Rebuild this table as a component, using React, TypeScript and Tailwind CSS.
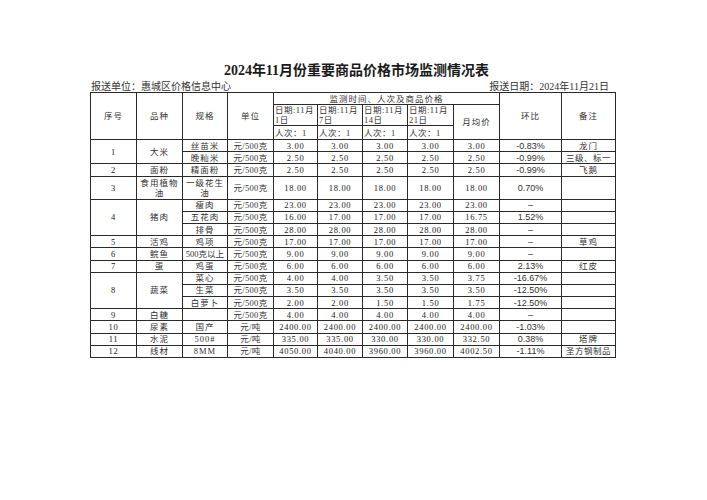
import React from 'react';

type Row = {
  no?: { t: string; span: number };
  kind?: { t: React.ReactNode; span: number };
  spec: React.ReactNode;
  unit: string;
  prices: string[];
  ratio: string;
  note?: string;
  tall?: boolean;
};

const rows: Row[] = [
  { no: { t: '1', span: 2 }, kind: { t: '大米', span: 2 }, spec: '丝苗米', unit: '元/500克', prices: ['3.00', '3.00', '3.00', '3.00', '3.00'], ratio: '-0.83%', note: '龙门' },
  { spec: '晚籼米', unit: '元/500克', prices: ['2.50', '2.50', '2.50', '2.50', '2.50'], ratio: '-0.99%', note: '三级、标一' },
  { no: { t: '2', span: 1 }, kind: { t: '面粉', span: 1 }, spec: '精面粉', unit: '元/500克', prices: ['2.50', '2.50', '2.50', '2.50', '2.50'], ratio: '-0.99%', note: '飞鹅' },
  {
    no: { t: '3', span: 1 },
    kind: { t: <>食用植物<br />油</>, span: 1 },
    spec: <>一级花生<br />油</>,
    unit: '元/500克',
    prices: ['18.00', '18.00', '18.00', '18.00', '18.00'],
    ratio: '0.70%',
    tall: true,
  },
  { no: { t: '4', span: 3 }, kind: { t: '猪肉', span: 3 }, spec: '瘦肉', unit: '元/500克', prices: ['23.00', '23.00', '23.00', '23.00', '23.00'], ratio: '–' },
  { spec: '五花肉', unit: '元/500克', prices: ['16.00', '17.00', '17.00', '17.00', '16.75'], ratio: '1.52%' },
  { spec: '排骨', unit: '元/500克', prices: ['28.00', '28.00', '28.00', '28.00', '28.00'], ratio: '–' },
  { no: { t: '5', span: 1 }, kind: { t: '活鸡', span: 1 }, spec: '鸡项', unit: '元/500克', prices: ['17.00', '17.00', '17.00', '17.00', '17.00'], ratio: '–', note: '草鸡' },
  { no: { t: '6', span: 1 }, kind: { t: '鲩鱼', span: 1 }, spec: '500克以上', unit: '元/500克', prices: ['9.00', '9.00', '9.00', '9.00', '9.00'], ratio: '–' },
  { no: { t: '7', span: 1 }, kind: { t: '蛋', span: 1 }, spec: '鸡蛋', unit: '元/500克', prices: ['6.00', '6.00', '6.00', '6.00', '6.00'], ratio: '2.13%', note: '红皮' },
  { no: { t: '8', span: 3 }, kind: { t: '蔬菜', span: 3 }, spec: '菜心', unit: '元/500克', prices: ['4.00', '4.00', '3.50', '3.50', '3.75'], ratio: '-16.67%' },
  { spec: '生菜', unit: '元/500克', prices: ['3.50', '3.50', '3.50', '3.50', '3.50'], ratio: '-12.50%' },
  { spec: '白萝卜', unit: '元/500克', prices: ['2.00', '2.00', '1.50', '1.50', '1.75'], ratio: '-12.50%' },
  { no: { t: '9', span: 1 }, kind: { t: '白糖', span: 1 }, spec: '', unit: '元/500克', prices: ['4.00', '4.00', '4.00', '4.00', '4.00'], ratio: '–' },
  { no: { t: '10', span: 1 }, kind: { t: '尿素', span: 1 }, spec: '国产', unit: '元/吨', prices: ['2400.00', '2400.00', '2400.00', '2400.00', '2400.00'], ratio: '-1.03%' },
  { no: { t: '11', span: 1 }, kind: { t: '水泥', span: 1 }, spec: '500#', unit: '元/吨', prices: ['335.00', '335.00', '330.00', '330.00', '332.50'], ratio: '0.38%', note: '塔牌' },
  { no: { t: '12', span: 1 }, kind: { t: '线材', span: 1 }, spec: '8MM', unit: '元/吨', prices: ['4050.00', '4040.00', '3960.00', '3960.00', '4002.50'], ratio: '-1.11%', note: '圣方钢制品' },
];

const td = 'border border-[#2a2a2a] p-0 text-center align-middle';
const cn = "font-['Liberation_Serif','Noto_Sans_CJK_SC',serif] text-[8.5px] leading-[10px] tracking-[1px] text-[#333]";
const num = "font-['Liberation_Serif',serif] text-[8.5px] leading-[10px] tracking-[0.7px] text-[#222]";
const pct = "font-['Liberation_Sans',sans-serif] text-[9px] leading-[10px] text-[#333]";

const DateHead: React.FC<{ day: string }> = ({ day }) => (
  <td className={`${td} !text-left !align-top h-[19px] pl-[1px] pt-[1px] ${cn} !leading-[9.5px] !tracking-[0.5px]`}>
    日期:11月
    <br />
    {day}日
  </td>
);

export default function App() {
  return (
    <div className="w-[707px] h-[500px] bg-white text-[#1a1a1a] pt-[63px] pl-[90px]">
      <div className="w-[525px]">
        <h1 className="text-center font-['Liberation_Serif','Noto_Sans_CJK_SC',serif] font-semibold text-[14px] leading-[16px] pl-[8px]">
          2024年11月份重要商品价格市场监测情况表
        </h1>
        <div className="flex justify-between items-end mt-[1px] h-[12px] font-['Liberation_Serif','Noto_Sans_CJK_SC',serif] text-[10px] leading-[11px] text-[#333]">
          <span className="pl-[1px]">报送单位：惠城区价格信息中心</span>
          <span className="pr-[6px]">报送日期：2024年11月21日</span>
        </div>
        <table className="w-[525px] table-fixed border-collapse border border-[#2a2a2a]">
          <colgroup>
            <col className="w-[46px]" />
            <col className="w-[46px]" />
            <col className="w-[45px]" />
            <col className="w-[46px]" />
            <col className="w-[44px]" />
            <col className="w-[45px]" />
            <col className="w-[45px]" />
            <col className="w-[46px]" />
            <col className="w-[46px]" />
            <col className="w-[62px]" />
            <col className="w-[54px]" />
          </colgroup>
          <thead>
            <tr>
              <td rowSpan={3} className={`${td} ${cn}`}>序号</td>
              <td rowSpan={3} className={`${td} ${cn}`}>品种</td>
              <td rowSpan={3} className={`${td} ${cn}`}>规格</td>
              <td rowSpan={3} className={`${td} ${cn}`}>单位</td>
              <td colSpan={5} className={`${td} ${cn} h-[12px]`}>监测时间、人次及商品价格</td>
              <td rowSpan={3} className={`${td} ${cn}`}>环比</td>
              <td rowSpan={3} className={`${td} ${cn}`}>备注</td>
            </tr>
            <tr>
              <DateHead day="1" />
              <DateHead day="7" />
              <DateHead day="14" />
              <DateHead day="21" />
              <td rowSpan={2} className={`${td} ${cn}`}>月均价</td>
            </tr>
            <tr>
              {[0, 1, 2, 3].map((i) => (
                <td key={i} className={`${td} ${cn} !text-left pl-[1px] h-[14px] !tracking-[0.5px]`}>
                  人次：1
                </td>
              ))}
            </tr>
          </thead>
          <tbody>
            {rows.map((r, i) => (
              <tr key={i} className={r.tall ? 'h-[23px]' : 'h-[12.2px]'}>
                {r.no && (
                  <td rowSpan={r.no.span} className={`${td} ${num}`}>{r.no.t}</td>
                )}
                {r.kind && (
                  <td rowSpan={r.kind.span} className={`${td} ${cn}`}>{r.kind.t}</td>
                )}
                <td className={`${td} ${cn} ${r.spec === '500克以上' ? '!tracking-[0px]' : ''}`}>{r.spec}</td>
                <td className={`${td} ${cn} !tracking-[0.3px]`}>{r.unit}</td>
                {r.prices.map((p, j) => (
                  <td key={j} className={`${td} ${num}`}>{p}</td>
                ))}
                <td className={`${td} ${pct}`}>{r.ratio}</td>
                <td className={`${td} ${cn} ${r.note === '三级、标一' || r.note === '圣方钢制品' ? '!tracking-[0.5px]' : ''} whitespace-nowrap overflow-hidden`}>
                  {r.note ?? ''}
                </td>
              </tr>
            ))}
          </tbody>
        </table>
      </div>
    </div>
  );
}
